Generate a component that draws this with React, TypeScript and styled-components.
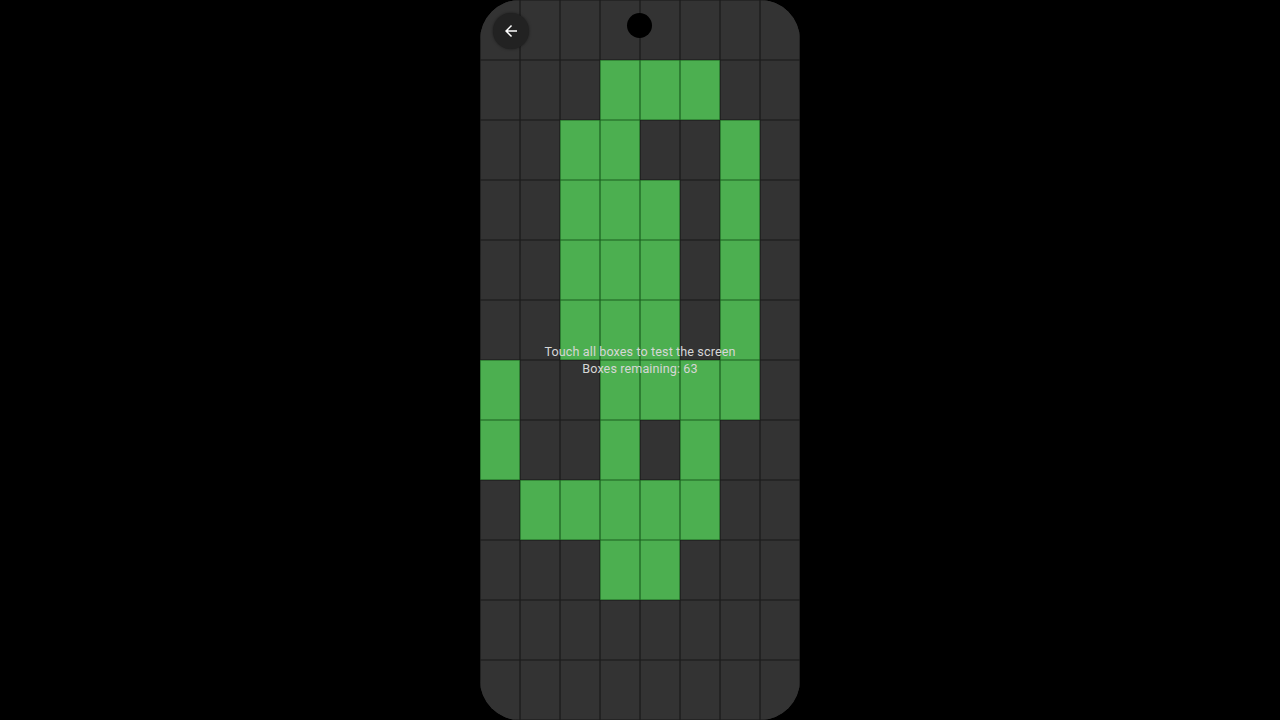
import * as React from "react";
import styled, { createGlobalStyle } from "styled-components";

const GlobalStyle = createGlobalStyle`
  html, body {
    margin: 0;
    padding: 0;
    background: #000;
    font-family: Roboto, "Noto Sans", sans-serif;
  }
`;

const Page = styled.div`
  width: 1280px;
  height: 720px;
  display: flex;
  justify-content: center;
  background: #000;
`;

const Phone = styled.div`
  position: relative;
  width: 320px;
  height: 720px;
  border-radius: 40px;
  overflow: hidden;
  background: #333;
`;

const Grid = styled.div`
  display: grid;
  grid-template-columns: repeat(8, 40px);
  grid-template-rows: repeat(12, 60px);
`;

const Box = styled.div<{ $done: boolean }>`
  background: ${(p) => (p.$done ? "#4caf50" : "#333333")};
  box-shadow: inset 0 0 0 0.6px ${(p) => (p.$done ? "#1a5e1f" : "#191919")};
`;

const BackButton = styled.button`
  position: absolute;
  left: 13px;
  top: 13px;
  width: 36px;
  height: 36px;
  border-radius: 50%;
  border: none;
  padding: 0;
  background: #222;
  box-shadow: 0 0 3px rgba(0, 0, 0, 0.5);
  display: flex;
  align-items: center;
  justify-content: center;
`;

const Camera = styled.div`
  position: absolute;
  left: 147px;
  top: 13px;
  width: 25px;
  height: 25px;
  border-radius: 50%;
  background: #000;
`;

const Hint = styled.div`
  position: absolute;
  left: 0;
  right: 0;
  top: 343px;
  text-align: center;
  color: #d6d6d6;
  font-size: 12.6px;
  line-height: 17px;
  letter-spacing: 0.1px;
  pointer-events: none;
`;

// rows of the 8x12 grid, "#" marks a box that has been touched
const PATTERN = [
  "........",
  "...###..",
  "..##..#.",
  "..###.#.",
  "..###.#.",
  "..###.#.",
  "#..####.",
  "#..#.#..",
  ".#####..",
  "...##...",
  "........",
  "........",
];

const App: React.FC = () => {
  const cells = PATTERN.join("").split("");
  const remaining = cells.filter((c) => c !== "#").length;

  return (
    <Page>
      <GlobalStyle />
      <Phone>
        <Grid>
          {cells.map((c, i) => (
            <Box key={i} $done={c === "#"} />
          ))}
        </Grid>
        <BackButton aria-label="Back">
          <svg width="18" height="18" viewBox="0 0 24 24" fill="#fff">
            <path d="M20 11H7.83l5.59-5.59L12 4l-8 8 8 8 1.41-1.41L7.83 13H20v-2z" />
          </svg>
        </BackButton>
        <Camera />
        <Hint>
          Touch all boxes to test the screen
          <br />
          Boxes remaining: {remaining}
        </Hint>
      </Phone>
    </Page>
  );
};

export default App;
